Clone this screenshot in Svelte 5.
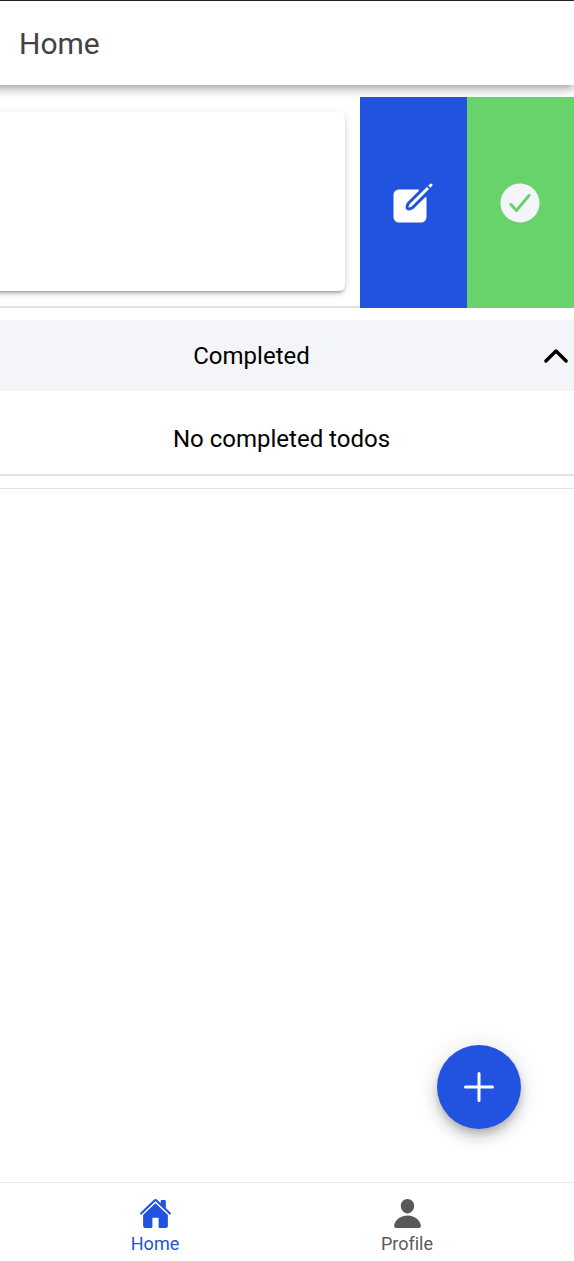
<script>
  let open = $state(true);
  let tab = $state('home');
</script>

<div class="app">
  <header>
    <h1>Home</h1>
  </header>

  <main>
    <div class="row">
      <div class="slide"><article class="card"></article></div>
      <button class="option edit" aria-label="Edit todo">
        <svg viewBox="0 0 512 512" aria-hidden="true">
          <path d="M459.94 53.25a16.06 16.06 0 00-23.22-.56L424.35 65a8 8 0 000 11.31l11.34 11.32a8 8 0 0011.34 0l12.06-12c6.1-6.09 6.67-16.01.85-22.38zM399.34 90L218.82 270.2a9 9 0 00-2.31 3.93L208.16 299a3.91 3.91 0 004.86 4.86l24.85-8.35a9 9 0 003.93-2.31L422 112.66a9 9 0 000-12.66l-9.95-10a9 9 0 00-12.71 0z" />
          <path d="M386.34 193.66L264.45 315.79A41.08 41.08 0 01247.58 326l-25.9 8.67a35.92 35.92 0 01-44.33-44.33l8.67-25.9a41.08 41.08 0 0110.19-16.87l122.13-121.91a8 8 0 00-5.65-13.66H104a56 56 0 00-56 56v240a56 56 0 0056 56h240a56 56 0 0056-56V199.31a8 8 0 00-13.66-5.65z" />
        </svg>
      </button>
      <button class="option done" aria-label="Complete todo">
        <svg viewBox="0 0 512 512" aria-hidden="true">
          <path d="M256 48C141.31 48 48 141.31 48 256s93.31 208 208 208 208-93.31 208-208S370.69 48 256 48zm108.25 138.29l-134.4 160a16 16 0 01-12 5.71h-.27a16 16 0 01-11.89-5.3l-57.6-64a16 16 0 1123.78-21.4l45.29 50.32 122.59-145.91a16 16 0 0124.5 20.58z" />
        </svg>
      </button>
    </div>

    <section>
      <button class="toggle" aria-expanded={open} onclick={() => (open = !open)}>
        <span>Completed</span>
        <svg class:closed={!open} viewBox="0 0 512 512" aria-hidden="true">
          <path d="M112 328l144-144 144 144" />
        </svg>
      </button>
      {#if open}
        <p>No completed todos</p>
      {/if}
    </section>
  </main>

  <button class="fab" aria-label="Add todo">
    <svg viewBox="0 0 512 512" aria-hidden="true">
      <path d="M256 112v288M400 256H112" />
    </svg>
  </button>

  <nav>
    <a href="#home" class:active={tab === 'home'} onclick={() => (tab = 'home')}>
      <svg viewBox="0 0 512 512" aria-hidden="true">
        <path d="M261.56 101.28a8 8 0 00-11.06 0L66.4 277.15a8 8 0 00-2.47 5.79L63.9 448a32 32 0 0032 32H192a16 16 0 0016-16V328a8 8 0 018-8h80a8 8 0 018 8v136a16 16 0 0016 16h96.06a32 32 0 0032-32V282.94a8 8 0 00-2.47-5.79z" />
        <path d="M490.91 244.15l-74.8-71.56V64a16 16 0 00-16-16h-48a16 16 0 00-16 16v32l-57.92-55.38C272.77 35.14 264.71 32 256 32c-8.68 0-16.72 3.14-22.14 8.63l-212.7 203.5c-6.22 6-7 15.87-1.34 22.37A16 16 0 0043 267.56L250.5 69.28a8 8 0 0111.06 0l207.52 198.28a16 16 0 0022.59-.44c6.14-6.36 5.63-16.86-.76-22.97z" />
      </svg>
      <span>Home</span>
    </a>
    <a href="#profile" class:active={tab === 'profile'} onclick={() => (tab = 'profile')}>
      <svg viewBox="0 0 512 512" aria-hidden="true">
        <path d="M332.64 64.58C313.18 43.57 286 32 256 32c-30.16 0-57.43 11.5-76.8 32.38-19.58 21.11-29.12 49.8-26.88 80.78C156.76 206.28 203.27 256 256 256s99.16-49.71 103.67-110.82c2.27-30.7-7.33-59.33-27.03-80.6zM432 480H80a31 31 0 01-24.2-11.13c-6.5-7.77-9.12-18.38-7.18-29.11C57.06 392.94 83.4 353.61 124.8 326c36.78-24.51 83.37-38 131.2-38s94.42 13.5 131.2 38c41.4 27.6 67.74 66.93 76.18 113.75 1.94 10.73-.68 21.34-7.18 29.11A31 31 0 01432 480z" />
      </svg>
      <span>Profile</span>
    </a>
  </nav>
</div>

<style>
  :global(body) {
    background: #fff;
  }

  .app {
    --primary: #2153e0;
    --success: #69d36b;
    --light: #f4f5f8;
    --line: #e2e2e2;
    display: flex;
    flex-direction: column;
    min-height: 100vh;
    font-family: Roboto, 'Liberation Sans', sans-serif;
    font-size: 24px;
    font-variant-ligatures: none;
    color: #000;
    overflow-x: hidden;
  }

  button {
    margin: 0;
    padding: 0;
    border: 0;
    font: inherit;
    color: inherit;
    cursor: pointer;
  }

  svg {
    display: block;
    fill: currentColor;
  }

  header {
    display: flex;
    align-items: center;
    box-sizing: border-box;
    height: 85px;
    margin-left: -12px;
    padding: 0 30px;
    border-top: 1px solid #222;
    background: #fff;
    box-shadow:
      0 3px 6px -2px rgba(0, 0, 0, 0.2),
      0 6px 8px 0 rgba(0, 0, 0, 0.14),
      0 2px 15px 0 rgba(0, 0, 0, 0.12);
  }

  h1 {
    margin: 0;
    padding-left: 1px;
    font-size: 30px;
    font-weight: 400;
    color: #424242;
  }

  main {
    flex: 1;
    padding-top: 12px;
  }

  .row {
    display: flex;
    height: 211px;
  }

  .slide {
    display: flex;
    flex: 1;
    margin-left: -12px;
    padding: 15px 15px 15px 0;
    border-bottom: 2px solid var(--line);
  }

  .card {
    flex: 1;
    border-radius: 6px;
    background: #fff;
    box-shadow:
      0 4px 2px -3px rgba(0, 0, 0, 0.2),
      0 3px 3px 0 rgba(0, 0, 0, 0.14),
      0 2px 8px 0 rgba(0, 0, 0, 0.12);
  }

  .option {
    display: grid;
    place-items: center;
    width: 107px;
    padding-right: 2px;
  }

  .option svg,
  .fab svg {
    width: 48px;
    height: 48px;
  }

  .edit {
    background: var(--primary);
    color: #fff;
  }

  .done {
    background: var(--success);
    color: var(--light);
  }

  section {
    margin-top: 12px;
    padding-bottom: 12px;
    border-bottom: 1px solid var(--line);
  }

  .toggle {
    display: flex;
    align-items: center;
    width: 100%;
    height: 71px;
    background: var(--light);
  }

  .toggle span {
    flex: 1;
    padding-right: 35px;
  }

  .toggle svg {
    width: 36px;
    height: 36px;
    fill: none;
    stroke: currentColor;
    stroke-width: 48;
    stroke-linecap: round;
    stroke-linejoin: round;
  }

  .toggle svg.closed {
    transform: rotate(180deg);
  }

  p {
    margin: 0;
    padding: 30px 11px 17px 0;
    border-bottom: 2px solid var(--line);
    line-height: 36px;
    text-align: center;
  }

  .fab {
    position: fixed;
    right: 53px;
    bottom: 132px;
    display: grid;
    place-items: center;
    width: 84px;
    height: 84px;
    border-radius: 50%;
    background: var(--primary);
    color: #fff;
    box-shadow:
      0 5px 8px -2px rgba(0, 0, 0, 0.2),
      0 9px 15px 0 rgba(0, 0, 0, 0.14),
      0 2px 27px 0 rgba(0, 0, 0, 0.12);
  }

  .fab svg {
    fill: none;
    stroke: currentColor;
    stroke-width: 32;
    stroke-linecap: round;
    stroke-linejoin: round;
  }

  nav {
    display: flex;
    justify-content: center;
    padding: 14px 12px 5px 0;
    border-top: 1px solid #ececec;
  }

  nav a {
    display: flex;
    flex: 0 1 252px;
    flex-direction: column;
    align-items: center;
    gap: 2px;
    font-size: 18px;
    line-height: 24px;
    color: #595959;
    text-decoration: none;
  }

  nav a.active {
    color: var(--primary);
  }

  nav svg {
    width: 33px;
    height: 33px;
  }
</style>
